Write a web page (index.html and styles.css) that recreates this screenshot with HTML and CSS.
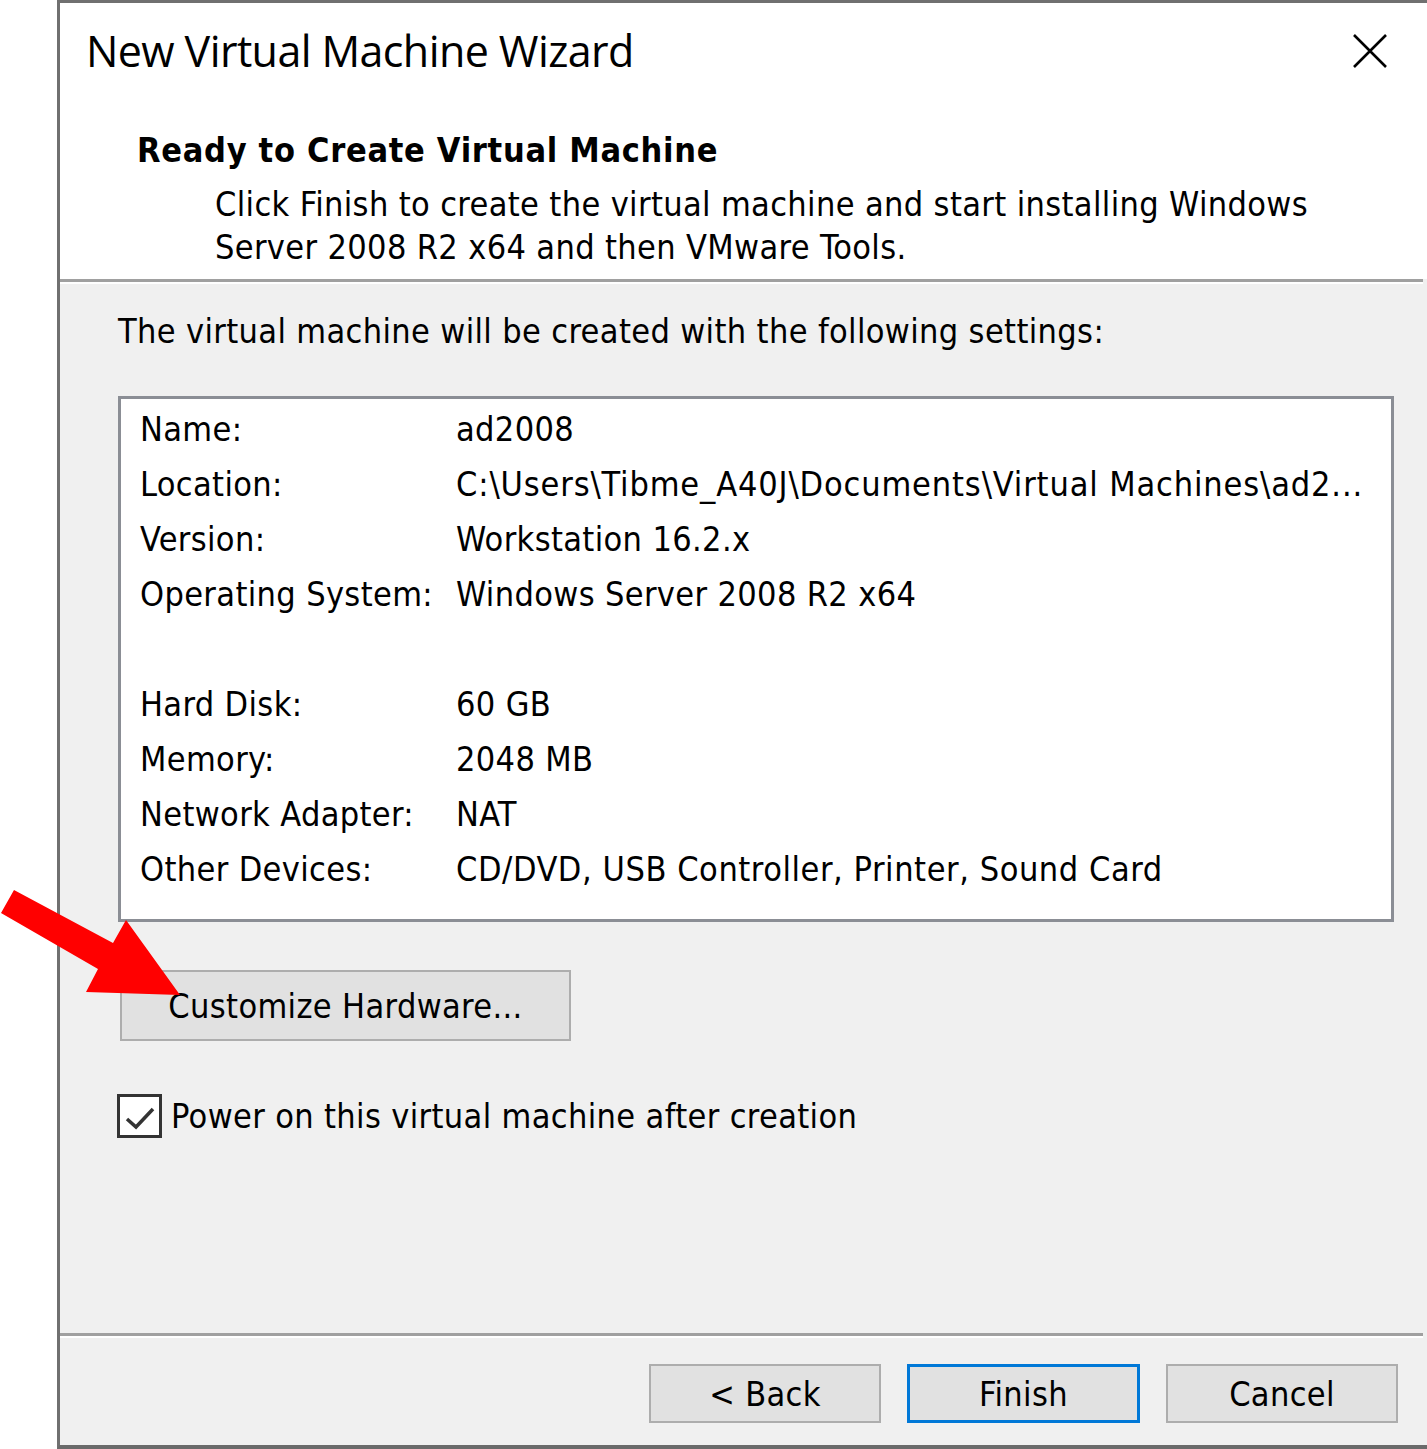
FILE: index.html
```html
<!DOCTYPE html>
<html>
<head>
<meta charset="utf-8">
<title>New Virtual Machine Wizard</title>
<link rel="stylesheet" href="styles.css">
</head>
<body>
<div class="dialog">
  <div class="header">
    <div class="titlerow">
      <div class="title">New Virtual Machine Wizard</div>
      <svg class="close" width="34" height="34" viewBox="0 0 34 34"><path d="M1 1 L33 33 M33 1 L1 33" stroke="#000" stroke-width="2.6" fill="none"/></svg>
    </div>
    <div class="heading">Ready to Create Virtual Machine</div>
    <div class="desc">Click Finish to create the virtual machine and start installing Windows<br>Server 2008 R2 x64 and then VMware Tools.</div>
  </div>
  <div class="sep"></div>
  <div class="body">
    <div class="intro">The virtual machine will be created with the following settings:</div>
    <div class="settings">
      <div class="lbl">Name:</div><div class="val">ad2008</div>
      <div class="lbl">Location:</div><div class="val path">C:\Users\Tibme_A40J\Documents\Virtual Machines\ad2...</div>
      <div class="lbl">Version:</div><div class="val">Workstation 16.2.x</div>
      <div class="lbl">Operating System:</div><div class="val">Windows Server 2008 R2 x64</div>
      <div class="lbl"></div><div class="val"></div>
      <div class="lbl">Hard Disk:</div><div class="val">60 GB</div>
      <div class="lbl">Memory:</div><div class="val">2048 MB</div>
      <div class="lbl">Network Adapter:</div><div class="val">NAT</div>
      <div class="lbl">Other Devices:</div><div class="val wide">CD/DVD, USB Controller, Printer, Sound Card</div>
    </div>
    <div class="btn custom">Customize Hardware...</div>
    <div class="checkrow">
      <div class="checkbox"><svg width="38" height="38" viewBox="0 0 38 38"><path d="M6 22 L15 30 L32 12" stroke="#333" stroke-width="3.5" fill="none"/></svg></div>
      <div class="checklabel">Power on this virtual machine after creation</div>
    </div>
  </div>
  <div class="sep"></div>
  <div class="footer">
    <div class="btn fbtn">&lt; Back</div>
    <div class="btn fbtn default">Finish</div>
    <div class="btn fbtn">Cancel</div>
  </div>
</div>
<svg class="arrow" width="200" height="1000" viewBox="0 0 200 1000"><polygon points="14,890 113,943 126,920 180,995 86,992 98,969 1,913" fill="#ff0000"/></svg>
</body>
</html>
```
FILE: styles.css
```css
html, body {
  margin: 0;
  padding: 0;
  overflow: hidden;
  background: #fff;
}
body {
  width: 1427px;
  height: 1449px;
  position: relative;
  font-family: "DejaVu Sans Condensed", "DejaVu Sans", sans-serif;
  font-stretch: condensed;
  font-size: 34px;
  letter-spacing: 0.35px;
  color: #000;
}
.dialog {
  margin-left: 57px;
  width: 1370px;
  height: 1449px;
  box-sizing: border-box;
  border-left: 3px solid #707070;
  border-top: 3px solid #707070;
  border-bottom: 4px solid #6a6a6a;
  display: flex;
  flex-direction: column;
  background: #f0f0f0;
}
.header {
  background: #fff;
  height: 276px;
  box-sizing: border-box;
  padding-top: 18px;
}
.titlerow {
  display: flex;
  align-items: center;
  justify-content: space-between;
  height: 60px;
  padding-left: 26px;
  padding-right: 40px;
}
.title {
  font-family: "Open Sans", "Noto Sans", sans-serif;
  font-stretch: normal;
  font-size: 43px;
  letter-spacing: -0.6px;
  line-height: 60px;
}
.close {
  display: block;
}
.heading {
  font-weight: bold;
  letter-spacing: 0.7px;
  line-height: 44px;
  margin-top: 47px;
  padding-left: 77px;
  white-space: nowrap;
}
.desc {
  line-height: 43px;
  margin-top: 11px;
  padding-left: 155px;
  white-space: nowrap;
}
.sep {
  width: 1363px;
  height: 3px;
  background: #a0a0a0;
  border-bottom: 2px solid #fff;
  flex: none;
}
.body {
  flex: 1;
  padding-left: 58px;
  padding-top: 25px;
}
.intro {
  line-height: 44px;
  white-space: nowrap;
}
.settings {
  margin-top: 43px;
  width: 1276px;
  height: 526px;
  box-sizing: border-box;
  border: 3px solid #8b8e95;
  background: #fff;
  padding: 3px 0 0 19px;
  display: grid;
  grid-template-columns: 316px 1fr;
  grid-auto-rows: 55px;
  align-items: center;
}
.lbl, .val {
  line-height: 55px;
  height: 55px;
  white-space: nowrap;
}
.val.path {
  letter-spacing: 0.85px;
}
.val.wide {
  letter-spacing: 0.55px;
}
.btn {
  box-sizing: border-box;
  background: #e1e1e1;
  border: 2px solid #adadad;
  display: flex;
  align-items: center;
  justify-content: center;
  white-space: nowrap;
}
.custom {
  margin-top: 48px;
  margin-left: 2px;
  width: 451px;
  height: 71px;
}
.checkrow {
  margin-top: 53px;
  display: flex;
  align-items: center;
  height: 44px;
}
.checkbox {
  margin-left: -1px;
  width: 45px;
  height: 44px;
  box-sizing: border-box;
  border: 3px solid #333;
  background: #fff;
  display: flex;
  align-items: center;
  justify-content: center;
}
.checkbox svg {
  display: block;
}
.checklabel {
  margin-left: 9px;
  line-height: 44px;
}
.footer {
  height: 107px;
  box-sizing: border-box;
  padding-top: 26px;
  padding-right: 29px;
  display: flex;
  justify-content: flex-end;
  gap: 26px;
}
.fbtn {
  width: 232px;
  height: 59px;
}
.fbtn.default {
  border: 3px solid #0078d7;
  width: 233px;
}
.arrow {
  position: absolute;
  left: 0;
  top: 0;
  pointer-events: none;
}
```
